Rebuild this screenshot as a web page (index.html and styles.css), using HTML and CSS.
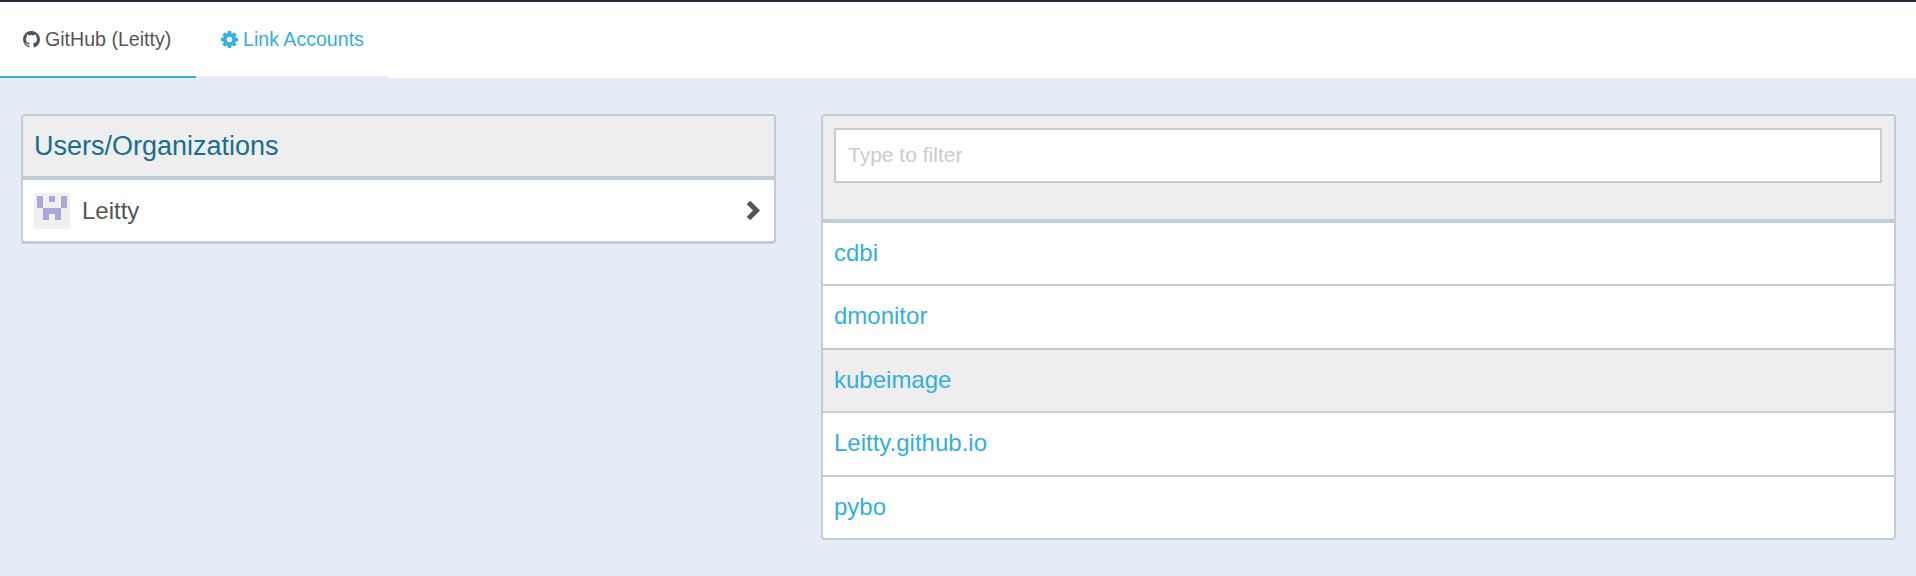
FILE: index.html
```html
<!DOCTYPE html>
<html lang="en">
<head>
    <meta charset="UTF-8">
    <title>Link Repositories</title>
    <link rel="stylesheet" href="styles.css">
</head>
<body>
    <header class="tabs">
        <a class="tab tab-active" href="#">
            <svg class="tab-icon" viewBox="128 128 1536 1536"><path fill="#555" d="M896 128q209 0 385.500 103t279.500 279.500 103 385.500q0 251-146.500 451.500t-378.500 277.500q-27 5-40-7t-13-30q0-3 .5-76.500t.5-134.500q0-97-52-142 57-6 102.500-18t94-39 81-66.500 53-105 20.500-150.500q0-119-79-206 37-91-8-204-28-9-81 11t-92 44l-38 24q-93-26-192-26t-192 26q-16-11-42.500-27t-83.500-38.500-85-13.500q-45 113-8 204-79 87-79 206 0 85 20.500 150t52.500 105 80.500 67 94 39 102.500 18q-39 36-49 103-21 10-45 15t-50 5-57.500-19-49.500-55q-17-28-43.500-46t-44.500-22l-18-2q-19 0-26 4t-4.500 10 8 12 11.500 11l6 5q20 9 39.500 34t28.500 46l9 21q12 35 40 57.500t62 29 64 6.500 50-3l21-4q0 35 .5 81.500t.5 50.500q0 18-13 30t-40 7q-232-77-378.500-277.500t-146.500-451.500q0-209 103-385.500t279.500-279.500 385.500-103z"/></svg>
            GitHub (Leitty)
        </a>
        <a class="tab" href="#">
            <svg class="tab-icon" viewBox="128 128 1536 1536"><path fill="#33aee0" d="M1152 896q0-106-75-181t-181-75-181 75-75 181 75 181 181 75 181-75 75-181zm512-109v222q0 12-8 23t-20 13l-185 28q-19 54-39 91 35 50 107 138 10 12 10 25t-9 23q-27 37-99 108t-94 71q-12 0-26-9l-138-108q-44 23-91 38-16 136-29 186-7 28-36 28h-222q-14 0-24.500-8.500t-11.500-21.500l-28-184q-49-16-90-37l-141 107q-10 9-25 9-14 0-25-11-126-114-165-168-7-10-7-23 0-12 8-23 15-21 51-66.500t54-70.500q-27-50-41-99l-183-27q-13-2-21-12.500t-8-23.500v-222q0-12 8-23t19-13l186-28q14-46 39-92-40-57-107-138-10-12-10-24 0-10 9-23 26-36 98.500-107.500t94.500-71.500q13 0 26 10l138 107q44-23 91-38 16-136 29-186 7-28 36-28h222q14 0 24.500 8.500t11.500 21.500l28 184q49 16 90 37l142-107q9-9 24-9 13 0 25 10 129 119 165 170 7 8 7 22 0 12-8 23-15 21-51 66.500t-54 70.500q26 50 41 98l183 28q13 2 21 12.500t8 23.500z"/></svg>
            Link Accounts
        </a>
    </header>
    <main class="columns">
        <section class="panel panel-owners">
            <h2 class="panel-title">Users/Organizations</h2>
            <div class="owner-row">
                <svg class="avatar" viewBox="0 0 36 36">
                    <rect width="36" height="36" fill="#f0f0f0"/>
                    <g fill="#a9a7dc">
                        <rect x="3" y="3" width="6" height="12"/>
                        <rect x="15" y="3" width="6" height="6"/>
                        <rect x="27" y="3" width="6" height="12"/>
                        <rect x="9" y="15" width="18" height="6"/>
                        <rect x="9" y="21" width="6" height="6"/>
                        <rect x="21" y="21" width="6" height="6"/>
                    </g>
                </svg>
                <span class="owner-name">Leitty</span>
                <svg class="chevron" viewBox="0 0 14 21"><path d="M2.500 2.500l8 8-8 8" fill="none" stroke="#555" stroke-width="5"/></svg>
            </div>
        </section>
        <section class="panel">
            <div class="filter-box">
                <input class="filter-input" type="text" placeholder="Type to filter">
            </div>
            <ul class="repo-list">
                <li class="repo"><a href="#">cdbi</a></li>
                <li class="repo"><a href="#">dmonitor</a></li>
                <li class="repo repo-hover"><a href="#">kubeimage</a></li>
                <li class="repo"><a href="#">Leitty.github.io</a></li>
                <li class="repo"><a href="#">pybo</a></li>
            </ul>
        </section>
    </main>
</body>
</html>
```

FILE: styles.css
```css
body {
    margin: 0;
    background: #e6ecf5;
    font-family: "Liberation Sans", Arial, sans-serif;
    color: #555;
}

a {
    color: #33aee0;
    text-decoration: none;
}

.tabs {
    display: flex;
    height: 76px;
    background: #fff;
    border-top: 2px solid #1f2d3d;
}

.tab {
    display: flex;
    align-items: center;
    gap: 5px;
    height: 74px;
    padding: 0 24px 0 25px;
    font-size: 19.600px;
    border-bottom: 2px solid #e6ecf5;
}

.tab:first-child {
    width: 150px;
    padding: 0 23px;
    color: #555;
    border-bottom-color: #33aee0;
}

.tab-icon {
    width: 17px;
    height: 17px;
}

.columns {
    display: grid;
    grid-template-columns: 755px 1075px;
    gap: 45px;
    align-items: start;
    padding: 36px 0 0 21px;
}

.panel {
    background: #fff;
    border: 2px solid #c2ccd9;
    border-radius: 4px;
}

.panel-owners {
    border-bottom-width: 3px;
}

.panel-title {
    margin: 0;
    height: 60px;
    padding-left: 11px;
    font-size: 27px;
    font-weight: normal;
    line-height: 60px;
    color: #1a6e8e;
    background: #eee;
    border-bottom: 4px solid #c2ccd9;
}

.owner-row {
    display: flex;
    align-items: center;
    height: 61px;
    padding: 0 14px 0 11px;
}

.avatar {
    width: 36px;
    height: 36px;
}

.owner-name {
    margin-left: 12px;
    font-size: 24px;
}

.chevron {
    width: 14px;
    height: 21px;
    margin-left: auto;
}

.filter-box {
    height: 91px;
    padding: 12px 12px 0 11px;
    background: #eee;
    border-bottom: 4px solid #c2ccd9;
}

.filter-input {
    display: block;
    width: 100%;
    height: 55px;
    padding: 0 12px 2px;
    box-sizing: border-box;
    font-family: inherit;
    font-size: 21px;
    color: #555;
    background: #fff;
    border: 2px solid #ccc;
    border-radius: 0;
}

.filter-input::placeholder {
    color: #ccc;
}

.repo-list {
    margin: 0;
    padding: 0;
    list-style: none;
}

.repo {
    height: 61.400px;
    padding-left: 11px;
    font-size: 24px;
    line-height: 60px;
    border-bottom: 2px solid #c2ccd9;
}

.repo:last-child {
    border-bottom: 0;
}

.repo-hover {
    background: #eee;
}
```
